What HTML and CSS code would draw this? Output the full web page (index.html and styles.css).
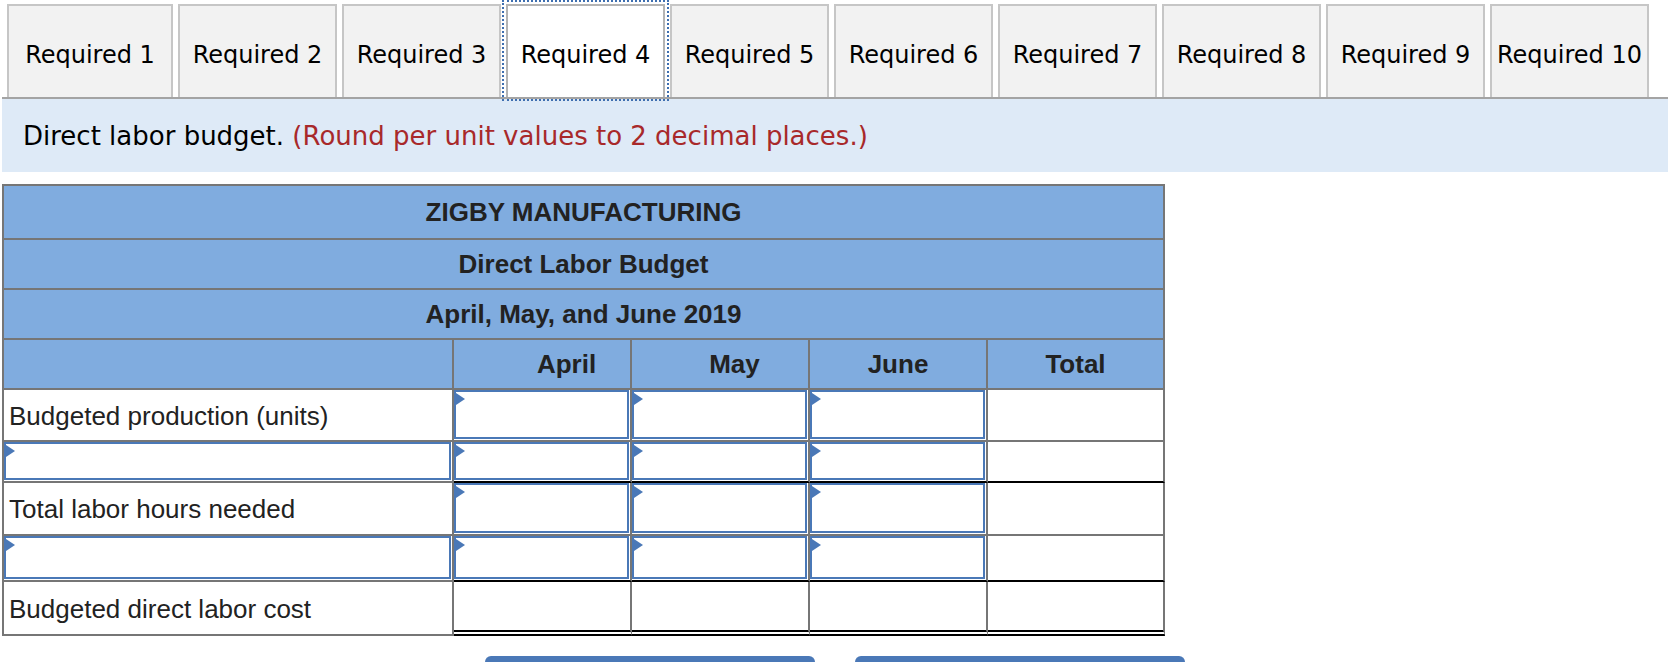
FILE: index.html
```html
<!DOCTYPE html>
<html lang="en">
<head>
<meta charset="utf-8">
<title>Direct Labor Budget</title>
<link rel="stylesheet" href="styles.css">
</head>
<body>
<div class="page">
  <nav class="tabs">
    <button class="tab first">Required 1</button>
    <button class="tab">Required 2</button>
    <button class="tab">Required 3</button>
    <button class="tab active">Required 4</button>
    <button class="tab">Required 5</button>
    <button class="tab">Required 6</button>
    <button class="tab">Required 7</button>
    <button class="tab">Required 8</button>
    <button class="tab">Required 9</button>
    <button class="tab">Required 10</button>
  </nav>

  <div class="prompt">Direct labor budget. <span class="note">(Round per unit values to 2 decimal places.)</span></div>

  <table class="budget">
    <colgroup>
      <col class="c-label">
      <col class="c-val">
      <col class="c-val">
      <col class="c-val">
      <col class="c-total">
    </colgroup>
    <tbody>
      <tr class="title t1"><td colspan="5">ZIGBY MANUFACTURING</td></tr>
      <tr class="title"><td colspan="5">Direct Labor Budget</td></tr>
      <tr class="title"><td colspan="5">April, May, and June 2019</td></tr>
      <tr class="colhead">
        <td></td>
        <td class="april">April</td>
        <td class="may">May</td>
        <td>June</td>
        <td>Total</td>
      </tr>
      <tr class="r5">
        <td class="label">Budgeted production (units)</td>
        <td class="in"><label class="field"><input type="text"></label></td>
        <td class="in"><label class="field"><input type="text"></label></td>
        <td class="in"><label class="field"><input type="text"></label></td>
        <td></td>
      </tr>
      <tr class="r6 sum">
        <td class="in lab"><label class="field"><input type="text"></label></td>
        <td class="in"><label class="field"><input type="text"></label></td>
        <td class="in"><label class="field"><input type="text"></label></td>
        <td class="in"><label class="field"><input type="text"></label></td>
        <td></td>
      </tr>
      <tr class="r7">
        <td class="label">Total labor hours needed</td>
        <td class="in"><label class="field"><input type="text"></label></td>
        <td class="in"><label class="field"><input type="text"></label></td>
        <td class="in"><label class="field"><input type="text"></label></td>
        <td></td>
      </tr>
      <tr class="r8 sum">
        <td class="in lab"><label class="field"><input type="text"></label></td>
        <td class="in"><label class="field"><input type="text"></label></td>
        <td class="in"><label class="field"><input type="text"></label></td>
        <td class="in"><label class="field"><input type="text"></label></td>
        <td></td>
      </tr>
      <tr class="r9 final">
        <td class="label">Budgeted direct labor cost</td>
        <td></td>
        <td></td>
        <td></td>
        <td></td>
      </tr>
    </tbody>
  </table>

  <div class="navrow">
    <button class="navbtn" aria-label="Previous: Required 3"></button>
    <button class="navbtn" aria-label="Next: Required 5"></button>
  </div>
</div>
</body>
</html>
```

FILE: styles.css
```css
html, body {
  margin: 0;
  padding: 0;
  background: #ffffff;
  overflow: hidden;
}

.page {
  padding-left: 2px;
}

/* Tabs */
.tabs {
  display: flex;
  align-items: flex-end;
  gap: 5px;
  padding-left: 5px;
  height: 97px;
  border-bottom: 2px solid #a4a4a4;
}

.tab {
  box-sizing: border-box;
  width: 159px;
  height: 93px;
  margin: 0;
  padding: 6px 0 0;
  border: 2px solid #c6c6c6;
  border-bottom: 0;
  background: #f2f2f2;
  color: #000;
  font: 24px "DejaVu Sans", Verdana, sans-serif;
  display: flex;
  align-items: center;
  justify-content: center;
  white-space: nowrap;
}

.tab.first {
  width: 166px;
}

.tab.active {
  background: #ffffff;
  border-color: #b4b4b4;
  outline: 2px dotted #3f6fb0;
  outline-offset: 2px;
  position: relative;
  z-index: 1;
}

/* Prompt band */
.prompt {
  height: 71px;
  padding: 2px 0 0 21px;
  background: #deeaf7;
  color: #000;
  font: 26px "DejaVu Sans", Verdana, sans-serif;
  line-height: 71px;
  white-space: nowrap;
}

.note {
  color: #a8292a;
}

/* Table */
.budget {
  margin-top: 12px;
  width: 1163px;
  table-layout: fixed;
  border-collapse: separate;
  border-spacing: 0;
  border-top: 2px solid #767676;
  border-left: 2px solid #767676;
  font: 26px "Liberation Sans", Arial, Helvetica, sans-serif;
  color: #222;
}

.c-label { width: 450px; }
.c-val { width: 178px; }
.c-total { width: 177px; }

.budget td {
  box-sizing: border-box;
  padding: 0;
  border-right: 2px solid #767676;
  border-bottom: 2px solid #767676;
  vertical-align: middle;
  height: 50px;
}

.title td,
.colhead td {
  background: #80acdf;
  font-weight: bold;
  text-align: center;
}

.title.t1 td { height: 54px; }

.colhead .april { padding-left: 49px; }
.colhead .may { padding-left: 29px; }

.budget .label {
  padding: 2px 0 0 5px;
  white-space: nowrap;
}

.r5 td { height: 52px; }
.r6 td { height: 41px; }
.r7 td { height: 53px; }
.r8 td { height: 46px; }
.r9 td { height: 54px; }

.budget td.in {
  padding: 0 1px 1px 0;
}

.field {
  display: block;
  position: relative;
  box-sizing: border-box;
  border: 2px solid #4a78b7;
  background: #fff;
}

.r5 .field { height: 49px; }
.r6 .field { height: 38px; }
.r7 .field { height: 50px; }
.r8 .field { height: 43px; }

.field::before {
  content: "";
  position: absolute;
  left: 0;
  top: 1px;
  border-left: 9px solid #4a78b7;
  border-top: 6px solid transparent;
  border-bottom: 6px solid transparent;
}

.field input {
  display: block;
  box-sizing: border-box;
  width: 100%;
  height: 100%;
  margin: 0;
  padding: 0 8px;
  border: 0;
  outline: none;
  background: transparent;
  font: inherit;
}

.sum td:not(.lab) {
  border-bottom-color: #000;
}

.final td:not(.label) {
  border-bottom: 6px double #000;
}

/* Bottom navigation */
.navrow {
  display: flex;
  justify-content: center;
  gap: 40px;
  margin-top: 20px;
}

.navbtn {
  width: 330px;
  height: 70px;
  margin: 0;
  padding: 0;
  border: 0;
  border-radius: 6px;
  background: #4a78b7;
}
```
